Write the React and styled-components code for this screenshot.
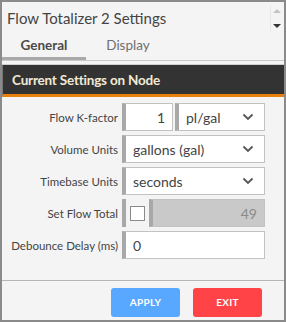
import React, { useState } from "react"
import styled, { createGlobalStyle } from "styled-components"

const Global = createGlobalStyle`
  html, body {
    margin: 0;
    padding: 0;
    background: #ffffff;
  }
  * {
    box-sizing: border-box;
  }
`

const font = `"Lato", "Open Sans", sans-serif`

const Dialog = styled.div`
  width: 286px;
  height: 322px;
  border: 2px solid #8a8a8a;
  background: #f4f4f4;
  font-family: ${font};
  color: #444;
  display: flex;
  flex-direction: column;
  overflow: hidden;
`

const TitleBar = styled.div`
  height: 31px;
  display: flex;
  align-items: center;
  justify-content: space-between;
  padding: 0 0 0 5px;
`

const Title = styled.div`
  font-size: 15px;
  color: #444;
  margin-top: 1px;
`

const Scroller = styled.div`
  width: 12px;
  height: 26px;
  margin-right: 2px;
  display: flex;
  flex-direction: column;
  align-items: center;
  justify-content: space-between;
  padding: 4px 0 3px;
  border-left: 1px solid #e6e6e6;
`

const Arrow = styled.div`
  width: 0;
  height: 0;
  border-left: 4px solid transparent;
  border-right: 4px solid transparent;
  ${p => p.up
    ? `border-bottom: 4px solid #c4c4c4;`
    : `border-top: 4px solid #333;`}
`

const Tabs = styled.div`
  display: flex;
  height: 28px;
  border-bottom: 1px solid #c9c9c9;
`

const Tab = styled.div`
  width: ${p => p.w}px;
  font-size: 13.5px;
  font-weight: ${p => (p.active ? 700 : 400)};
  color: ${p => (p.active ? "#4a4a4a" : "#6e6e6e")};
  text-align: center;
  padding-top: 4px;
  border-bottom: 3px solid ${p => (p.active ? "#a9a9a9" : "transparent")};
`

const Panel = styled.div`
  flex: 1;
  margin-top: 3px;
  border-top: 1px solid #d0d0d0;
  display: flex;
  flex-direction: column;
`

const PanelHeader = styled.div`
  height: 32px;
  background: #333333;
  color: #f1ead6;
  font-size: 13.5px;
  font-weight: 700;
  letter-spacing: -0.2px;
  padding: 7px 0 0 9px;
  border-bottom: 3px solid #e8800c;
  border-left: 1px solid #777;
`

const Form = styled.div`
  flex: 1;
  display: flex;
  flex-direction: column;
  gap: 4px;
  padding: 6px 19px 0 0;
  border-bottom: 1px solid #b5b5b5;
`

const Row = styled.div`
  display: flex;
  align-items: center;
  height: 28px;
`

const Label = styled.div`
  width: 120px;
  flex-shrink: 0;
  white-space: nowrap;
  text-align: right;
  font-size: 11.5px;
  color: #444;
  padding-right: 4px;
`

const Box = styled.div`
  height: 28px;
  width: ${p => p.w}px;
  margin-left: ${p => p.gap || 0}px;
  background: ${p => (p.disabled ? "#c9c9c9" : "#ffffff")};
  border: 1px solid #c2c2c2;
  border-left: 4px solid #a8a8a8;
  display: flex;
  align-items: center;
  justify-content: ${p => (p.right ? "flex-end" : "space-between")};
  padding: 0 ${p => (p.right ? 7 : 10)}px 0 7px;
  font-size: 14px;
  color: ${p => (p.disabled ? "#8a8a8a" : "#444")};
`

const Chevron = () => (
  <svg width="12" height="8" viewBox="0 0 12 8">
    <path d="M1.5 1.5 L6 6 L10.5 1.5" fill="none" stroke="#555" strokeWidth="1.8" />
  </svg>
)

const CheckHolder = styled.div`
  height: 28px;
  width: 27px;
  border-left: 4px solid #a8a8a8;
  display: flex;
  align-items: center;
  padding-left: 4px;
`

const Check = styled.div`
  width: 15px;
  height: 15px;
  border: 1.5px solid #8a8a8a;
  background: ${p => (p.on ? "#5aa9ff" : "#fff")};
`

const Footer = styled.div`
  height: 39px;
  display: flex;
  align-items: center;
  justify-content: flex-end;
  gap: 13px;
  padding: 3px 22px 0 0;
`

const Button = styled.button`
  width: 69px;
  height: 29px;
  border: none;
  border-radius: 3px;
  background: ${p => p.bg};
  color: #fff;
  font-family: ${font};
  font-weight: 700;
  font-size: 10px;
  letter-spacing: 0.3px;
`

export default function App() {
  const [tab, setTab] = useState("general")
  const [setTotal, setSetTotal] = useState(false)

  return (
    <>
      <Global />
      <Dialog>
        <TitleBar>
          <Title>Flow Totalizer 2 Settings</Title>
          <Scroller>
            <Arrow up />
            <Arrow />
          </Scroller>
        </TitleBar>
        <Tabs>
          <Tab w={84} active={tab === "general"} onClick={() => setTab("general")}>General</Tab>
          <Tab w={84} active={tab === "display"} onClick={() => setTab("display")}>Display</Tab>
        </Tabs>
        <Panel>
          <PanelHeader>Current Settings on Node</PanelHeader>
          <Form>
            <Row>
              <Label>Flow K-factor</Label>
              <Box w={51} right>1</Box>
              <Box w={90} gap={2}>pl/gal<Chevron /></Box>
            </Row>
            <Row>
              <Label>Volume Units</Label>
              <Box w={143}>gallons (gal)<Chevron /></Box>
            </Row>
            <Row>
              <Label>Timebase Units</Label>
              <Box w={143}>seconds<Chevron /></Box>
            </Row>
            <Row>
              <Label>Set Flow Total</Label>
              <CheckHolder onClick={() => setSetTotal(!setTotal)}>
                <Check on={setTotal} />
              </CheckHolder>
              <Box w={116} disabled right>49</Box>
            </Row>
            <Row>
              <Label>Debounce Delay (ms)</Label>
              <Box w={143}>0</Box>
            </Row>
          </Form>
          <Footer>
            <Button bg="#59a8ff">APPLY</Button>
            <Button bg="#ff4347">EXIT</Button>
          </Footer>
        </Panel>
      </Dialog>
    </>
  )
}
